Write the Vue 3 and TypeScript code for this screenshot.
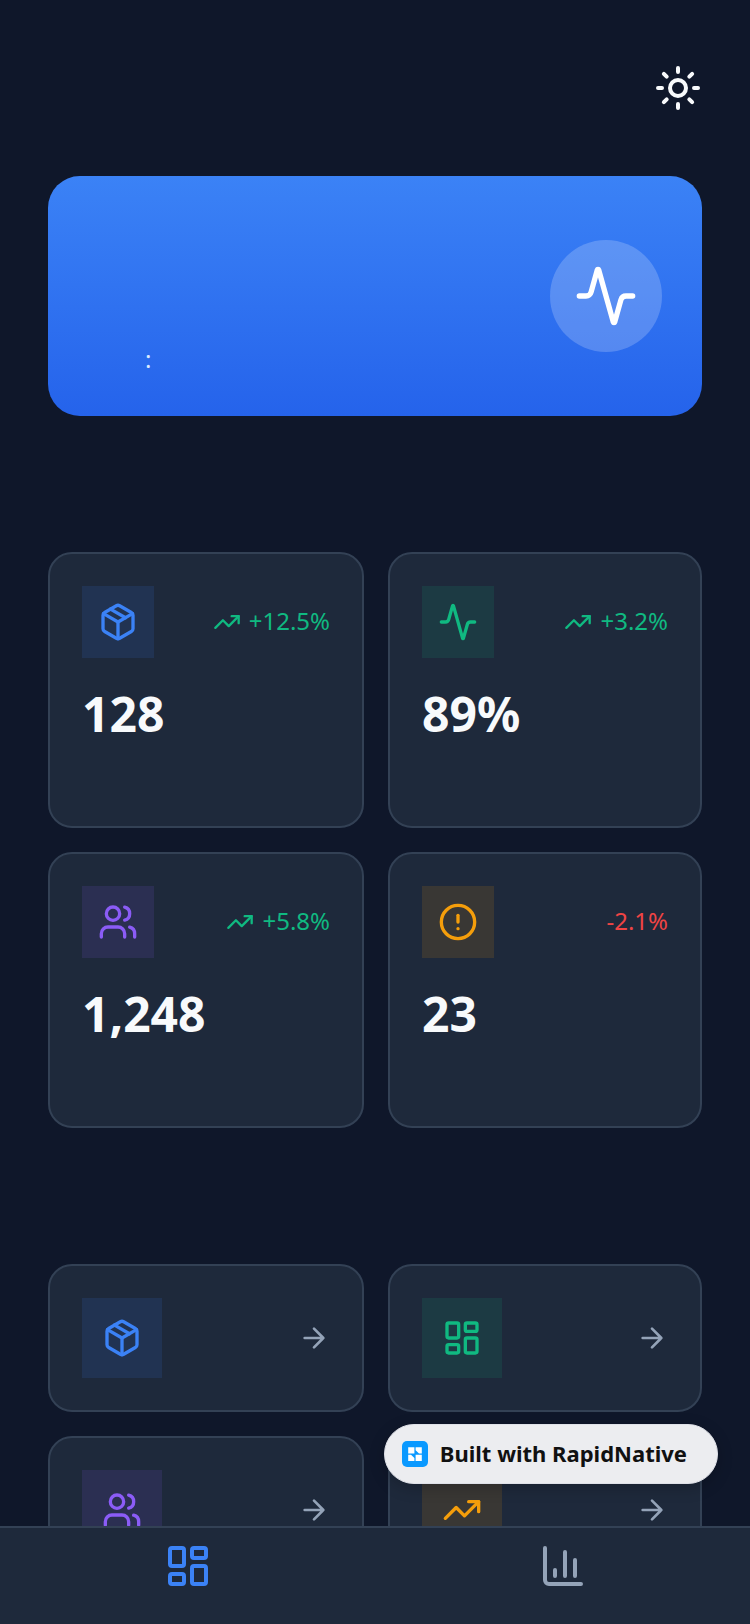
<script setup lang="ts">
type Shape = { tag: 'path' | 'circle' | 'rect'; attrs: Record<string, string | number> }
type IconName = 'package' | 'activity' | 'users' | 'alert' | 'trend' | 'dashboard'
type Tone = 'blue' | 'green' | 'purple' | 'amber'

interface Stat {
  name: string
  icon: IconName
  tone: Tone
  value: string
  change: string
  up: boolean
}

interface Action {
  name: string
  icon: IconName
  tone: Tone
}

const path = (d: string): Shape => ({ tag: 'path', attrs: { d } })
const circle = (cx: number, cy: number, r: number): Shape => ({ tag: 'circle', attrs: { cx, cy, r } })
const rect = (x: number, y: number, width: number, height: number): Shape => ({
  tag: 'rect',
  attrs: { x, y, width, height, rx: 1 },
})

const icons: Record<IconName, Shape[]> = {
  package: [
    path('m7.5 4.27 9 5.15'),
    path('M21 8a2 2 0 0 0-1-1.73l-7-4a2 2 0 0 0-2 0l-7 4A2 2 0 0 0 3 8v8a2 2 0 0 0 1 1.73l7 4a2 2 0 0 0 2 0l7-4A2 2 0 0 0 21 16Z'),
    path('m3.3 7 8.7 5 8.7-5'),
    path('M12 22V12'),
  ],
  activity: [
    path('M22 12h-2.48a2 2 0 0 0-1.93 1.46l-2.35 8.36a.25.25 0 0 1-.48 0L9.24 2.18a.25.25 0 0 0-.48 0l-2.35 8.36A2 2 0 0 1 4.49 12H2'),
  ],
  users: [
    path('M16 21v-2a4 4 0 0 0-4-4H6a4 4 0 0 0-4 4v2'),
    circle(9, 7, 4),
    path('M22 21v-2a4 4 0 0 0-3-3.87'),
    path('M16 3.13a4 4 0 0 1 0 7.75'),
  ],
  alert: [circle(12, 12, 10), path('M12 8v4'), path('M12 16h.01')],
  trend: [path('m22 7-8.5 8.5-5-5L2 17'), path('M16 7h6v6')],
  dashboard: [rect(3, 3, 7, 9), rect(14, 3, 7, 5), rect(14, 12, 7, 9), rect(3, 16, 7, 5)],
}

const stats: Stat[] = [
  { name: 'Products', icon: 'package', tone: 'blue', value: '128', change: '+12.5%', up: true },
  { name: 'Activity', icon: 'activity', tone: 'green', value: '89%', change: '+3.2%', up: true },
  { name: 'Users', icon: 'users', tone: 'purple', value: '1,248', change: '+5.8%', up: true },
  { name: 'Alerts', icon: 'alert', tone: 'amber', value: '23', change: '-2.1%', up: false },
]

const actions: Action[] = [
  { name: 'Products', icon: 'package', tone: 'blue' },
  { name: 'Dashboard', icon: 'dashboard', tone: 'green' },
  { name: 'Users', icon: 'users', tone: 'purple' },
  { name: 'Trends', icon: 'trend', tone: 'amber' },
]
</script>

<template>
  <div class="app">
    <main class="content">
      <header class="topbar">
        <button class="theme" type="button" aria-label="Toggle theme">
          <svg class="icon icon-lg" viewBox="0 0 24 24">
            <circle cx="12" cy="12" r="4" />
            <path d="M12 2v2M12 20v2M4.93 4.93l1.41 1.41M17.66 17.66l1.41 1.41M2 12h2M20 12h2M6.34 17.66l-1.41 1.41M19.07 4.93l-1.41 1.41" />
          </svg>
        </button>
      </header>

      <section class="hero" aria-label="Status">
        <p class="updated">:</p>
        <div class="pulse">
          <svg class="icon icon-xl" viewBox="0 0 24 24">
            <component :is="s.tag" v-for="(s, i) in icons.activity" :key="i" v-bind="s.attrs" />
          </svg>
        </div>
      </section>

      <section class="grid" aria-label="Statistics">
        <article v-for="stat in stats" :key="stat.name" class="card" :aria-label="stat.name">
          <div class="row">
            <div class="tile" :class="stat.tone">
              <svg class="icon icon-md" viewBox="0 0 24 24">
                <component :is="s.tag" v-for="(s, i) in icons[stat.icon]" :key="i" v-bind="s.attrs" />
              </svg>
            </div>
            <div class="change" :class="{ down: !stat.up }">
              <svg v-if="stat.up" class="icon icon-xs" viewBox="0 0 24 24">
                <component :is="s.tag" v-for="(s, i) in icons.trend" :key="i" v-bind="s.attrs" />
              </svg>
              <span class="label">{{ stat.change }}</span>
            </div>
          </div>
          <p class="value">{{ stat.value }}</p>
        </article>
      </section>

      <section class="grid" aria-label="Quick actions">
        <button v-for="action in actions" :key="action.name" class="card row" type="button" :aria-label="action.name">
          <span class="tile large" :class="action.tone">
            <svg class="icon icon-md" viewBox="0 0 24 24">
              <component :is="s.tag" v-for="(s, i) in icons[action.icon]" :key="i" v-bind="s.attrs" />
            </svg>
          </span>
          <svg class="icon icon-sm arrow" viewBox="0 0 24 24">
            <path d="M5 12h14M12 5l7 7-7 7" />
          </svg>
        </button>
      </section>
    </main>

    <nav class="tabs" aria-label="Main">
      <a class="tab active" href="#dashboard" aria-label="Dashboard" aria-current="page">
        <svg class="icon icon-lg" viewBox="0 0 24 24">
          <component :is="s.tag" v-for="(s, i) in icons.dashboard" :key="i" v-bind="s.attrs" />
        </svg>
      </a>
      <a class="tab" href="#reports" aria-label="Reports">
        <svg class="icon icon-lg" viewBox="0 0 24 24">
          <path d="M3 3v16a2 2 0 0 0 2 2h16M18 17V9M13 17V5M8 17v-3" />
        </svg>
      </a>
    </nav>

    <a class="badge" href="#rapidnative">
      <svg class="logo" viewBox="0 0 26 26" aria-hidden="true">
        <rect width="26" height="26" rx="5" fill="#0a99ff" />
        <path
          d="M6.2 6.3h6.2v6.2H6.2zM13.6 6.3h6.2v6.2H17l-3.400-3.300zM6.2 13.700H9l3.400 3.300v2.900H6.2zM13.6 13.700h6.200v6.200h-6.200z"
          fill="#fff"
        />
      </svg>
      <span class="label">Built with RapidNative</span>
    </a>
  </div>
</template>

<style>
body {
  margin: 0;
  background: #0f172a;
}
</style>

<style scoped>
.app {
  position: relative;
  display: flex;
  flex-direction: column;
  height: 100vh;
  background: #0f172a;
  color: #f8fafc;
  font-family: "Noto Sans", "Open Sans", sans-serif;
}

.content {
  flex: 1;
  min-height: 0;
  overflow-y: auto;
  scrollbar-width: none;
  padding: 64px 48px 0;
}

.icon {
  display: block;
  flex: none;
  fill: none;
  stroke: currentColor;
  stroke-width: 2;
  stroke-linecap: round;
  stroke-linejoin: round;
}

.icon-xs { width: 28px; height: 28px; }
.icon-sm { width: 32px; height: 32px; }
.icon-md { width: 40px; height: 40px; }
.icon-lg { width: 48px; height: 48px; }
.icon-xl { width: 64px; height: 64px; }

.topbar {
  display: flex;
  justify-content: flex-end;
  margin-bottom: 64px;
}

.theme {
  padding: 0;
  border: 0;
  background: none;
  color: inherit;
}

.hero {
  display: flex;
  align-items: center;
  justify-content: space-between;
  min-height: 160px;
  padding: 40px;
  border-radius: 32px;
  background: linear-gradient(#3b82f6, #2563eb);
  color: #fff;
}

.updated {
  align-self: flex-end;
  margin: 0;
  padding-left: 57px;
  color: #dbeafe;
  font-size: 24px;
  line-height: 34px;
}

.pulse {
  display: flex;
  padding: 24px;
  border-radius: 50%;
  background: rgba(255, 255, 255, 0.2);
}

.grid {
  display: grid;
  grid-template-columns: 316fr 314fr;
  gap: 24px;
  margin-top: 136px;
}

.card {
  box-sizing: border-box;
  padding: 32px;
  border: 2px solid #334155;
  border-radius: 24px;
  background: #1e293b;
  color: inherit;
  font: inherit;
}

.row {
  display: flex;
  align-items: center;
  justify-content: space-between;
}

.tile {
  padding: 16px;
}

.tile.large {
  padding: 20px;
}

.blue { color: #3b82f6; background: #3b82f620; }
.green { color: #10b981; background: #10b98120; }
.purple { color: #8b5cf6; background: #8b5cf620; }
.amber { color: #f59e0b; background: #f59e0b20; }

.change {
  display: flex;
  align-items: center;
  gap: 8px;
  color: #10b981;
  font-size: 24px;
  line-height: 32px;
}

.change.down {
  color: #ef4444;
}

.label {
  padding-bottom: 2px;
}

.value {
  margin: 24px 0 48px;
  font-size: 48px;
  font-weight: 700;
  line-height: 64px;
}

.arrow {
  color: #94a3b8;
}

.tabs {
  display: flex;
  box-sizing: border-box;
  height: 98px;
  border-top: 2px solid #334155;
  background: #1e293b;
}

.tab {
  display: flex;
  flex: 1;
  justify-content: center;
  padding-top: 14px;
  color: #94a3b8;
}

.tab.active {
  color: #3b82f6;
}

.badge {
  position: absolute;
  right: 32px;
  bottom: 140px;
  display: flex;
  align-items: center;
  gap: 12px;
  box-sizing: border-box;
  height: 60px;
  padding: 0 30px 0 17px;
  border: 1px solid #dfe1e8;
  border-radius: 30px;
  background: #ecedf0;
  box-shadow: 0 4px 16px rgba(0, 0, 0, 0.2);
  color: #111;
  font-size: 22px;
  font-weight: 700;
  line-height: 32px;
  text-decoration: none;
  white-space: nowrap;
}

.logo {
  width: 26px;
  height: 26px;
}
</style>
